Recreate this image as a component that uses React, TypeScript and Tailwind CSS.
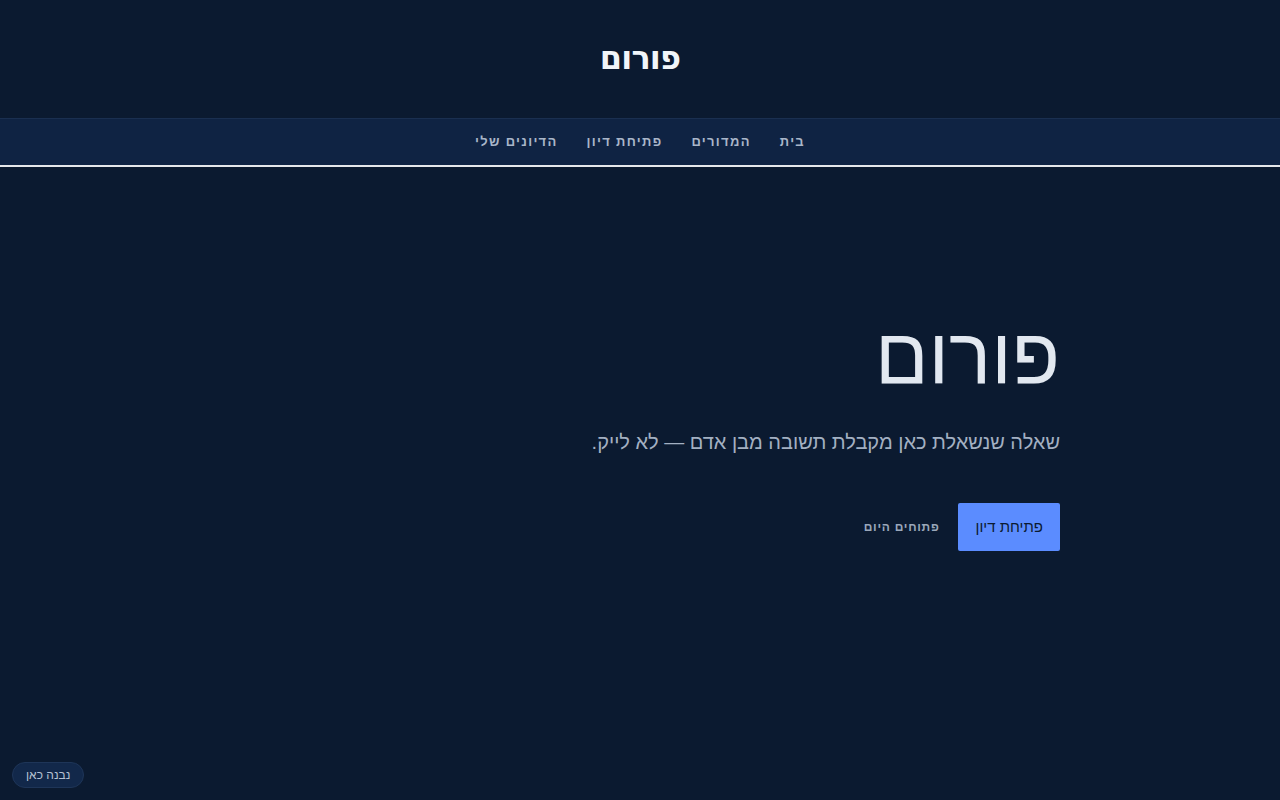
export default function App() {
  const nav = ["בית", "המדורים", "פתיחת דיון", "הדיונים שלי"];
  return (
    <div dir="rtl" className="min-h-screen bg-[#0b1a30] text-[#e2e8f0] relative font-['Liberation_Sans',sans-serif]">
      <header className="h-[118px] flex items-center justify-center">
        <h1 className="text-[32px] font-black text-[#f1f5f9] tracking-tight font-['DejaVu_Sans',sans-serif] -mt-[2px]">פורום</h1>
      </header>
      <nav className="h-[49px] bg-[#0f2343] border-t border-[#1a2f50] border-b-2 border-b-[#e5e7eb] flex items-center justify-center gap-[29px]">
        {nav.map((n) => (
          <a key={n} className="text-[13px] font-bold tracking-[0.1em] text-[#a9b6c9] -mt-[1px]">{n}</a>
        ))}
      </nav>
      <main className="max-w-[840px] mx-auto pt-[150px]">
        <h2 className="text-[79px] font-extralight leading-none text-[#e2e8f0] font-['DejaVu_Sans',sans-serif]">פורום</h2>
        <p className="mt-[32px] text-[20px] leading-[28px] text-[#a3b0c2]">שאלה שנשאלת כאן מקבלת תשובה מבן אדם — לא לייק.</p>
        <div className="mt-[47px] flex items-center gap-[19px]">
          <button className="h-[48px] px-[17px] bg-[#5b8cff] text-[#0b1a30] text-[15px] font-medium rounded-[2px]">פתיחת דיון</button>
          <a className="text-[12px] font-bold tracking-[0.06em] text-[#9aa7ba]">פתוחים היום</a>
        </div>
      </main>
      <div className="absolute left-[12px] bottom-[12px] h-[26px] px-[13px] rounded-full bg-[#12284a] border border-[#1e3558] flex items-center text-[12px] text-[#b6c2d3]">נבנה כאן</div>
    </div>
  );
}
